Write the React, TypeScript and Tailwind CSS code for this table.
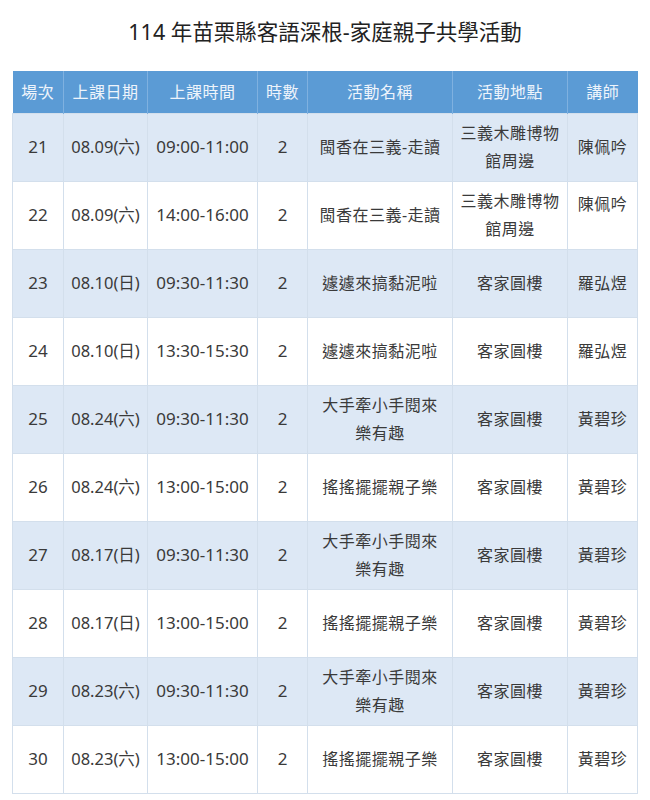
import React from "react";

type Row = {
  no: string;
  date: string;
  time: string;
  hours: string;
  name: React.ReactNode;
  place: React.ReactNode;
  teacher: string;
  teacherTop?: boolean;
};

const big = (
  <>
    大手牽小手閱來
    <br />
    樂有趣
  </>
);
const museum = (
  <>
    三義木雕博物
    <br />
    館周邊
  </>
);

const rows: Row[] = [
  { no: "21", date: "08.09(六)", time: "09:00-11:00", hours: "2", name: "閩香在三義-走讀", place: museum, teacher: "陳佩吟" },
  { no: "22", date: "08.09(六)", time: "14:00-16:00", hours: "2", name: "閩香在三義-走讀", place: museum, teacher: "陳佩吟", teacherTop: true },
  { no: "23", date: "08.10(日)", time: "09:30-11:30", hours: "2", name: "遽遽來搞黏泥啦", place: "客家圓樓", teacher: "羅弘煜" },
  { no: "24", date: "08.10(日)", time: "13:30-15:30", hours: "2", name: "遽遽來搞黏泥啦", place: "客家圓樓", teacher: "羅弘煜" },
  { no: "25", date: "08.24(六)", time: "09:30-11:30", hours: "2", name: big, place: "客家圓樓", teacher: "黃碧珍" },
  { no: "26", date: "08.24(六)", time: "13:00-15:00", hours: "2", name: "搖搖擺擺親子樂", place: "客家圓樓", teacher: "黃碧珍" },
  { no: "27", date: "08.17(日)", time: "09:30-11:30", hours: "2", name: big, place: "客家圓樓", teacher: "黃碧珍" },
  { no: "28", date: "08.17(日)", time: "13:00-15:00", hours: "2", name: "搖搖擺擺親子樂", place: "客家圓樓", teacher: "黃碧珍" },
  { no: "29", date: "08.23(六)", time: "09:30-11:30", hours: "2", name: big, place: "客家圓樓", teacher: "黃碧珍" },
  { no: "30", date: "08.23(六)", time: "13:00-15:00", hours: "2", name: "搖搖擺擺親子樂", place: "客家圓樓", teacher: "黃碧珍" },
];

const headers = ["場次", "上課日期", "上課時間", "時數", "活動名稱", "活動地點", "講師"];

export default function App() {
  return (
    <div
      className="w-[650px] h-[800px] bg-white text-[#3a3a3a]"
      style={{ fontFamily: '"Noto Sans", "Noto Sans CJK TC", sans-serif' }}
    >
      <div className="h-[71px] pt-[16px] text-center text-[21.5px] leading-[32px] text-[#222]">
        114 年苗栗縣客語深根-家庭親子共學活動
      </div>
      <table className="ml-[12px] w-[625px] table-fixed border-collapse text-[16px]">
        <colgroup>
          <col className="w-[51px]" />
          <col className="w-[84px]" />
          <col className="w-[110px]" />
          <col className="w-[50px]" />
          <col className="w-[145px]" />
          <col className="w-[115px]" />
          <col className="w-[70px]" />
        </colgroup>
        <thead>
          <tr className="h-[42px] bg-[#5b9bd5]">
            {headers.map((h, i) => (
              <th
                key={h}
                className={
                  "font-normal text-[#eef4fb] text-center p-0 tracking-[0.5px] " +
                  (i < headers.length - 1 ? "border-r border-[#7fb1e0]" : "")
                }
              >
                {h}
              </th>
            ))}
          </tr>
        </thead>
        <tbody>
          {rows.map((r, idx) => (
            <tr
              key={r.no}
              className={
                "h-[68px] border border-[#d3dfec] " + (idx % 2 === 0 ? "bg-[#dde8f5]" : "bg-white")
              }
            >
              <td className="border border-[#d3dfec] text-center p-0 text-[17px]">{r.no}</td>
              <td className="border border-[#d3dfec] text-center p-0 text-[16.5px]">{r.date}</td>
              <td className="border border-[#d3dfec] text-center p-0 text-[17px]">{r.time}</td>
              <td className="border border-[#d3dfec] text-center p-0 text-[17px]">{r.hours}</td>
              <td className="border border-[#d3dfec] text-center p-0 leading-[28px] tracking-[0.5px]">
                {r.name}
              </td>
              <td className="border border-[#d3dfec] text-center p-0 leading-[28px] tracking-[0.5px]">
                {r.place}
              </td>
              <td
                className={
                  "border border-[#d3dfec] text-center p-0 tracking-[0.5px] " +
                  (r.teacherTop ? "align-top pt-[9px] leading-[26px]" : "")
                }
              >
                {r.teacher}
              </td>
            </tr>
          ))}
        </tbody>
      </table>
    </div>
  );
}
